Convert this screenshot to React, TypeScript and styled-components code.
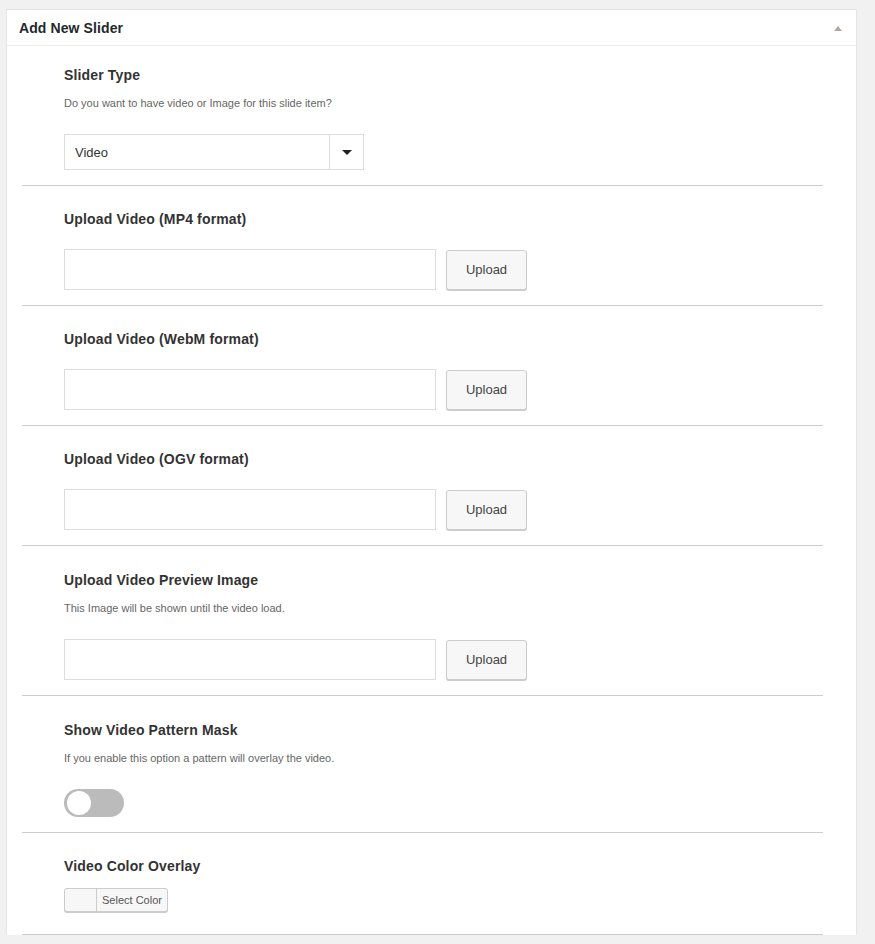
import React from "react";
import styled, { createGlobalStyle } from "styled-components";

const Global = createGlobalStyle`
  html, body { margin: 0; padding: 0; background: #f1f1f1; }
  body { font-family: "Liberation Sans", Arial, sans-serif; color: #333; }
`;

const Page = styled.div`
  padding: 9px 18px 0 6px;
`;

const Panel = styled.div`
  background: #fff;
  border: 1px solid #e5e5e5;
  border-bottom: none;
  box-shadow: 0 1px 1px rgba(0, 0, 0, 0.04);
`;

const PanelHeader = styled.div`
  height: 35px;
  display: flex;
  align-items: center;
  justify-content: space-between;
  padding: 0 14px 0 12px;
  border-bottom: 1px solid #eee;
`;

const PanelTitle = styled.h2`
  margin: 0;
  font-family: "Liberation Sans", Arial, sans-serif;
  font-size: 14px;
  font-weight: 700;
  color: #23282d;
  letter-spacing: 0.1px;
`;

const Toggle = styled.span`
  width: 0;
  height: 0;
  border-left: 4px solid transparent;
  border-right: 4px solid transparent;
  border-bottom: 5px solid #b0a89f;
  margin-top: 2px;
`;

const Body = styled.div`
  padding: 0 33px 0 15px;
`;

const Section = styled.div<{ $top?: number; $bottom?: number }>`
  padding: ${(p) => p.$top ?? 23}px 0 ${(p) => p.$bottom ?? 15}px 42px;
  border-bottom: 1px solid #ccc;
`;

const Title = styled.h3`
  margin: 0;
  font-size: 14px;
  line-height: 20px;
  font-weight: 700;
  color: #333;
  letter-spacing: 0.15px;
`;

const Desc = styled.p`
  margin: 10px 0 0;
  font-size: 11px;
  line-height: 16px;
  color: #666;
`;

const Control = styled.div<{ $gap?: number }>`
  margin-top: ${(p) => p.$gap ?? 20}px;
  display: flex;
  align-items: center;
`;

const Select = styled.div`
  width: 298px;
  height: 34px;
  border: 1px solid #ddd;
  display: flex;
  align-items: stretch;
  font-size: 13px;
  color: #333;
`;

const SelectValue = styled.div`
  flex: 1;
  display: flex;
  align-items: center;
  padding-left: 10px;
`;

const SelectArrow = styled.div`
  width: 33px;
  border-left: 1px solid #ddd;
  display: flex;
  align-items: center;
  justify-content: center;
  &::after {
    content: "";
    width: 0;
    height: 0;
    border-left: 5px solid transparent;
    border-right: 5px solid transparent;
    border-top: 5px solid #222;
  }
`;

const TextInput = styled.div`
  width: 370px;
  height: 39px;
  border: 1px solid #ddd;
  background: #fff;
`;

const Button = styled.div`
  margin-left: 10px;
  width: 81px;
  height: 40px;
  border: 1px solid #ccc;
  border-radius: 3px;
  background: #f7f7f7;
  box-shadow: 0 1px 0 #ccc;
  box-sizing: border-box;
  display: flex;
  align-items: center;
  justify-content: center;
  font-size: 13px;
  color: #444;
`;

const Switch = styled.div`
  width: 60px;
  height: 28px;
  border-radius: 14px;
  background: #bbb;
  position: relative;
  &::after {
    content: "";
    position: absolute;
    left: 3px;
    top: 2px;
    width: 24px;
    height: 24px;
    border-radius: 50%;
    background: #fff;
  }
`;

const ColorButton = styled.div`
  height: 22px;
  width: 102px;
  border: 1px solid #ccc;
  border-radius: 3px;
  background: #f7f7f7;
  box-shadow: 0 1px 0 #ccc;
  display: flex;
  font-size: 11px;
  color: #555;
`;

const Swatch = styled.span`
  width: 31px;
  border-right: 1px solid #ccc;
`;

const ColorLabel = styled.span`
  flex: 1;
  display: flex;
  align-items: center;
  justify-content: center;
`;

const uploads = [
  { title: "Upload Video (MP4 format)" },
  { title: "Upload Video (WebM format)" },
  { title: "Upload Video (OGV format)" },
  { title: "Upload Video Preview Image", desc: "This Image will be shown until the video load." },
];

export default function App() {
  return (
    <Page>
      <Global />
      <Panel>
        <PanelHeader>
          <PanelTitle>Add New Slider</PanelTitle>
          <Toggle />
        </PanelHeader>
        <Body>
          <Section $top={19}>
            <Title>Slider Type</Title>
            <Desc>Do you want to have video or Image for this slide item?</Desc>
            <Control $gap={23}>
              <Select>
                <SelectValue>Video</SelectValue>
                <SelectArrow />
              </Select>
            </Control>
          </Section>
          {uploads.map((u) => (
            <Section key={u.title} $top={u.desc ? 24 : 23}>
              <Title>{u.title}</Title>
              {u.desc && <Desc>{u.desc}</Desc>}
              <Control $gap={u.desc ? 23 : 20}>
                <TextInput />
                <Button>Upload</Button>
              </Control>
            </Section>
          ))}
          <Section $top={24}>
            <Title>Show Video Pattern Mask</Title>
            <Desc>If you enable this option a pattern will overlay the video.</Desc>
            <Control $gap={23}>
              <Switch />
            </Control>
          </Section>
          <Section $bottom={22}>
            <Title>Video Color Overlay</Title>
            <Control $gap={12}>
              <ColorButton>
                <Swatch />
                <ColorLabel>Select Color</ColorLabel>
              </ColorButton>
            </Control>
          </Section>
        </Body>
      </Panel>
    </Page>
  );
}
